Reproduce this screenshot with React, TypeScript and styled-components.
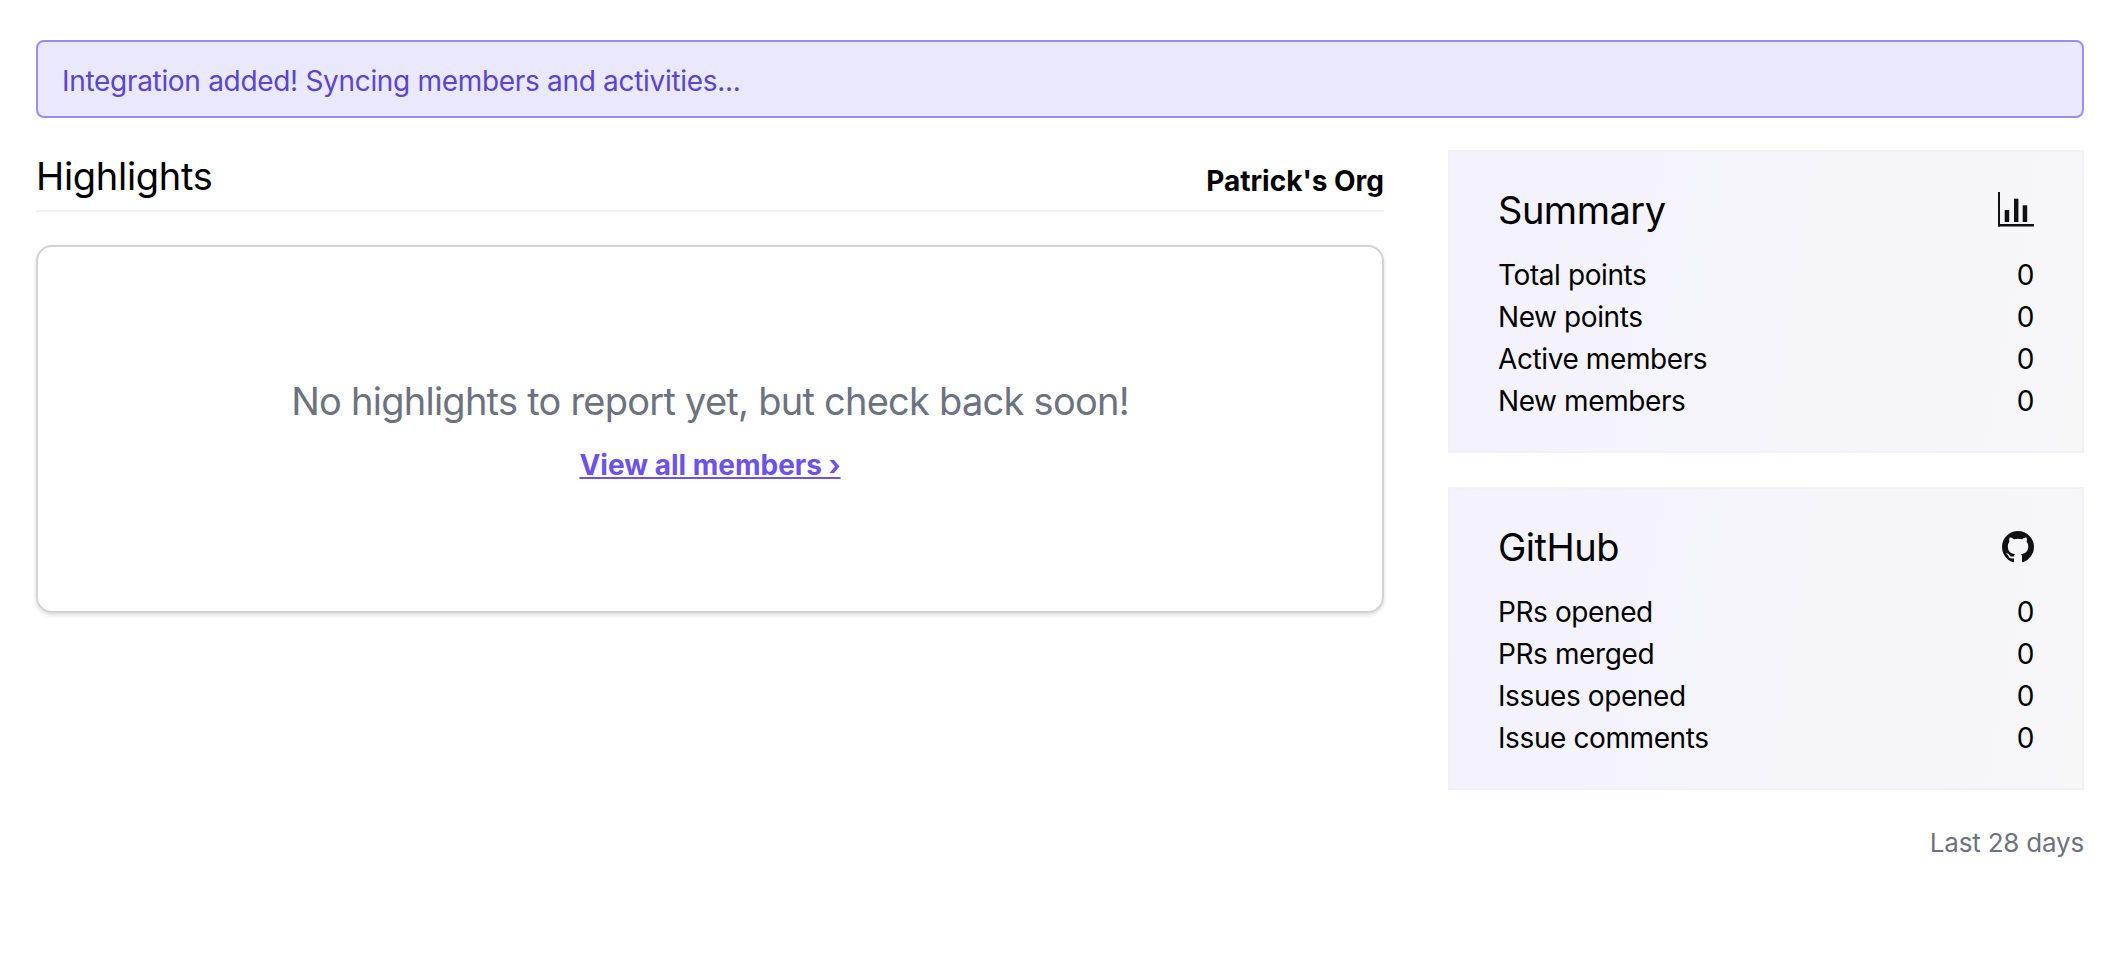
import styled, { createGlobalStyle } from "styled-components";

const GlobalStyle = createGlobalStyle`
  html, body {
    margin: 0;
    padding: 0;
    background: #fff;
    font-family: "Inter", "Liberation Sans", sans-serif;
    color: #000;
  }
  * { box-sizing: border-box; }
`;

const Page = styled.div`
  width: 2112px;
  height: 968px;
  padding: 40px 28px 0 36px;
`;

const Banner = styled.div`
  height: 78px;
  display: flex;
  align-items: center;
  padding: 3px 24px 0;
  background: #e9e8fc;
  border: 2px solid #9a8cf0;
  border-radius: 8px;
  color: #5a45cf;
  font-size: 28px;
  letter-spacing: -0.31px;
  margin-bottom: 32px;
`;

const Columns = styled.div`
  display: grid;
  grid-template-columns: 1348px 636px;
  column-gap: 64px;
  align-items: start;
`;

const Main = styled.div`
  display: flex;
  flex-direction: column;
`;

const SectionHeader = styled.div`
  height: 62px;
  display: flex;
  justify-content: space-between;
  align-items: center;
  padding-bottom: 8px;
  border-bottom: 2px solid #f1f1f3;
  margin-bottom: 33px;
`;

const Heading = styled.h2`
  margin: 0;
  font-size: 38px;
  font-weight: 400;
  line-height: 52px;
  letter-spacing: -0.3px;
`;

const StatTitle = styled(Heading)`
  letter-spacing: -0.5px;
`;

const OrgName = styled.div`
  font-size: 28px;
  font-weight: 700;
  margin-top: 9px;
`;

const HighlightCard = styled.div`
  height: 368px;
  padding-top: 2px;
  display: flex;
  flex-direction: column;
  align-items: center;
  justify-content: center;
  border: 2px solid #d2d2d8;
  border-radius: 16px;
  box-shadow: 0 2px 4px rgba(0, 0, 0, 0.14);
  background: #fff;
`;

const EmptyText = styled.p`
  margin: 0 0 16px;
  font-size: 38px;
  line-height: 54px;
  letter-spacing: -0.75px;
  color: #6b7280;
`;

const MembersLink = styled.a`
  font-size: 28px;
  font-weight: 700;
  line-height: 42px;
  color: #6c52ea;
  text-decoration: underline;
`;

const Side = styled.div`
  display: flex;
  flex-direction: column;
  gap: 34px;
`;

const StatCard = styled.section`
  height: 303px;
  padding: 32px 48px;
  background: linear-gradient(100deg, #f3f2fd 0%, #f7f7f8 100%);
  border: 2px solid #f2f2f4;
`;

const StatHeader = styled.div`
  display: flex;
  justify-content: space-between;
  align-items: center;
  height: 52px;
  margin-bottom: 18px;
`;

const StatRow = styled.div`
  display: flex;
  justify-content: space-between;
  font-size: 28px;
  line-height: 42px;
  letter-spacing: -0.4px;
`;

const Period = styled.div`
  margin-top: 33px;
  text-align: right;
  font-size: 26px;
  line-height: 40px;
  letter-spacing: -0.2px;
  color: #6b7280;
`;

const BarsIcon = () => (
  <svg width="36" height="36" viewBox="0 0 36 36" fill="#111">
    <rect x="0" y="0" width="2" height="34.5" />
    <rect x="0" y="32" width="36" height="2.5" />
    <rect x="6.7" y="18" width="4.5" height="12" />
    <rect x="16" y="6.7" width="4.4" height="23.3" />
    <rect x="24.7" y="13.3" width="4.5" height="16.7" />
  </svg>
);

const GithubIcon = () => (
  <svg width="32" height="32" viewBox="0 0 16 16" fill="#111">
    <path d="M8 0C3.58 0 0 3.58 0 8c0 3.54 2.29 6.53 5.47 7.59.4.07.55-.17.55-.38 0-.19-.01-.82-.01-1.49-2.01.37-2.53-.49-2.69-.94-.09-.23-.48-.94-.82-1.13-.28-.15-.68-.52-.01-.53.63-.01 1.08.58 1.23.82.72 1.21 1.87.87 2.33.66.07-.52.28-.87.51-1.07-1.78-.2-3.64-.89-3.64-3.95 0-.87.31-1.59.82-2.15-.08-.2-.36-1.02.08-2.12 0 0 .67-.21 2.2.82.64-.18 1.32-.27 2-.27s1.36.09 2 .27c1.53-1.04 2.2-.82 2.2-.82.44 1.1.16 1.92.08 2.12.51.56.82 1.27.82 2.15 0 3.07-1.87 3.75-3.65 3.95.29.25.54.73.54 1.48 0 1.07-.01 1.93-.01 2.2 0 .21.15.46.55.38A8.01 8.01 0 0 0 16 8c0-4.42-3.58-8-8-8z" />
  </svg>
);

const summary = [
  ["Total points", 0],
  ["New points", 0],
  ["Active members", 0],
  ["New members", 0],
] as const;

const github = [
  ["PRs opened", 0],
  ["PRs merged", 0],
  ["Issues opened", 0],
  ["Issue comments", 0],
] as const;

function App() {
  return (
    <Page>
      <GlobalStyle />
      <Banner>Integration added! Syncing members and activities...</Banner>
      <Columns>
        <Main>
          <SectionHeader>
            <Heading>Highlights</Heading>
            <OrgName>Patrick's Org</OrgName>
          </SectionHeader>
          <HighlightCard>
            <EmptyText>No highlights to report yet, but check back soon!</EmptyText>
            <MembersLink href="#">View all members ›</MembersLink>
          </HighlightCard>
        </Main>
        <Side>
          <StatCard>
            <StatHeader>
              <StatTitle>Summary</StatTitle>
              <BarsIcon />
            </StatHeader>
            {summary.map(([label, value]) => (
              <StatRow key={label}>
                <span>{label}</span>
                <span>{value}</span>
              </StatRow>
            ))}
          </StatCard>
          <StatCard>
            <StatHeader>
              <StatTitle>GitHub</StatTitle>
              <GithubIcon />
            </StatHeader>
            {github.map(([label, value]) => (
              <StatRow key={label}>
                <span>{label}</span>
                <span>{value}</span>
              </StatRow>
            ))}
          </StatCard>
        </Side>
      </Columns>
      <Period>Last 28 days</Period>
    </Page>
  );
}

export default App;
